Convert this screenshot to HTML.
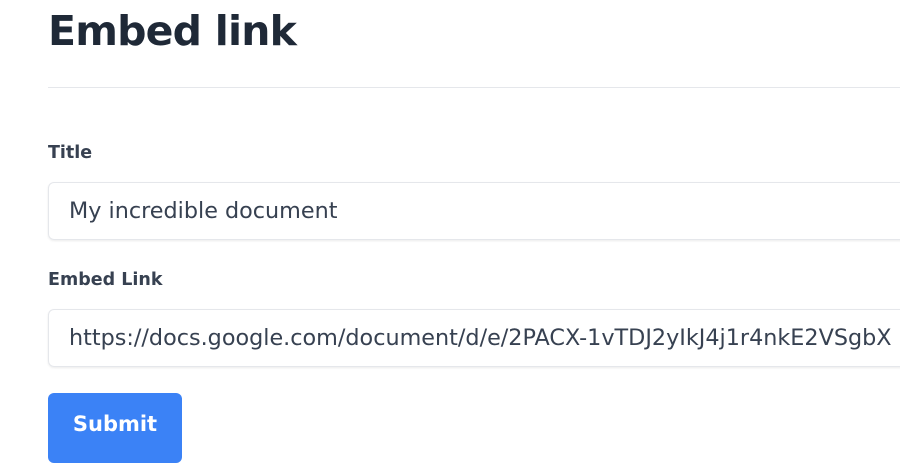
<!DOCTYPE html>
<html><head><style>
body{margin:0;width:900px;height:453px;overflow:hidden;background:#fff;font-family:"DejaVu Sans","Liberation Sans",sans-serif;color:#1f2937;position:relative}
.h{position:absolute;left:48px;top:7px;font-size:41px;font-weight:bold;color:#1f2937;letter-spacing:-0.8px}
.hr{position:absolute;left:48px;top:87px;width:860px;height:1px;background:#e5e7eb}
.l{position:absolute;left:48px;font-size:17.5px;font-weight:bold;color:#374151}
.i{position:absolute;left:48px;width:880px;height:58px;border:1px solid #e5e7eb;border-radius:6px;box-shadow:0 1px 2px rgba(0,0,0,.08);box-sizing:border-box;padding-left:20px;line-height:56px;font-size:22.3px;color:#374151;white-space:nowrap;overflow:hidden}
.b{position:absolute;left:48px;top:393px;width:134px;height:70px;background:#3b82f6;border-radius:6px;color:#fff;font-weight:bold;font-size:21px;text-align:center;line-height:62px}
</style></head><body>
<div class="h">Embed link</div>
<div class="hr"></div>
<div class="l" style="top:143px">Title</div>
<div class="i" style="top:182px">My incredible document</div>
<div class="l" style="top:270px">Embed Link</div>
<div class="i" style="top:309px">https://docs.google.com/document/d/e/2PACX-1vTDJ2yIkJ4j1r4nkE2VSgbX</div>
<div class="b">Submit</div>
</body></html>
